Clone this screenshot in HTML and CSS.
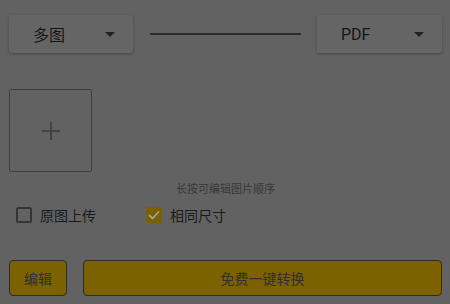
FILE: index.html
```html
<!DOCTYPE html>
<html>
<head>
<meta charset="utf-8">
<link rel="stylesheet" href="styles.css">
</head>
<body>
<div class="page">
  <div class="top">
    <div class="select"><span>多图</span><span class="caret"></span></div>
    <div class="line"></div>
    <div class="select pdf"><span>PDF</span><span class="caret"></span></div>
  </div>
  <div class="add">
    <svg width="18" height="18" viewBox="0 0 18 18"><path d="M9 0V18M0 9H18" stroke="#3a3d3d" stroke-width="1.5" fill="none"/></svg>
  </div>
  <div class="hint">长按可编辑图片顺序</div>
  <div class="opts">
    <label class="opt"><span class="box"></span>原图上传</label>
    <label class="opt on"><span class="box"><svg width="12" height="10" viewBox="0 0 12 10"><path d="M1 5L4.5 8.5L11 1.5" stroke="#a3a3a3" stroke-width="1.8" fill="none"/></svg></span>相同尺寸</label>
  </div>
  <div class="actions">
    <div class="btn edit">编辑</div>
    <div class="btn go">免费一键转换</div>
  </div>
</div>
</body>
</html>
```
FILE: styles.css
```css
html, body {
  margin: 0;
  padding: 0;
  background: #626262;
  font-family: "Noto Sans CJK SC", "Roboto", sans-serif;
  width: 450px;
  height: 304px;
  overflow: hidden;
}
.page {
  padding: 15px 8px 0 9px;
}
.top {
  display: flex;
  align-items: center;
}
.select {
  width: 124px;
  height: 38px;
  box-sizing: border-box;
  background: #656565;
  border-radius: 2px;
  box-shadow: 0 1px 3px rgba(0,0,0,0.3);
  display: flex;
  align-items: center;
  justify-content: space-between;
  padding: 0 18px 0 24px;
  font-size: 16px;
  color: #151515;
}
.select.pdf {
  width: 125px;
  font-family: "Roboto", sans-serif;
  font-size: 16px;
  padding-left: 24px;
}
.caret {
  width: 0;
  height: 0;
  border-left: 5px solid transparent;
  border-right: 5px solid transparent;
  border-top: 5px solid #222;
}
.line {
  flex: 1;
  height: 2px;
  background: #2b2b2b;
  margin: 0 16px 0 17px;
}
.add {
  margin-top: 36px;
  width: 83px;
  height: 83px;
  box-sizing: border-box;
  border: 1px solid #3d4040;
  border-radius: 2px;
  display: flex;
  align-items: center;
  justify-content: center;
}
.hint {
  text-align: center;
  font-size: 11px;
  color: #383838;
  margin-top: 8px;
  line-height: 16px;
}
.opts {
  display: flex;
  margin-top: 9px;
  padding-left: 7px;
  height: 20px;
  align-items: center;
}
.opt {
  display: flex;
  align-items: center;
  font-size: 14px;
  color: #1a1a1a;
  width: 130px;
}
.box {
  width: 16px;
  height: 16px;
  box-sizing: border-box;
  border: 2px solid #353535;
  border-radius: 2px;
  margin-right: 8px;
  display: flex;
  align-items: center;
  justify-content: center;
}
.opt.on .box {
  background: #7a6000;
  border-color: #7a6000;
}
.actions {
  display: flex;
  margin-top: 35px;
  gap: 16px;
}
.btn {
  height: 36px;
  box-sizing: border-box;
  border: 1.5px solid #2c2c2c;
  border-radius: 4px;
  background: #7b6100;
  color: #303030;
  font-size: 14px;
  display: flex;
  align-items: center;
  justify-content: center;
}
.edit {
  width: 58px;
}
.go {
  flex: 1;
}
```
